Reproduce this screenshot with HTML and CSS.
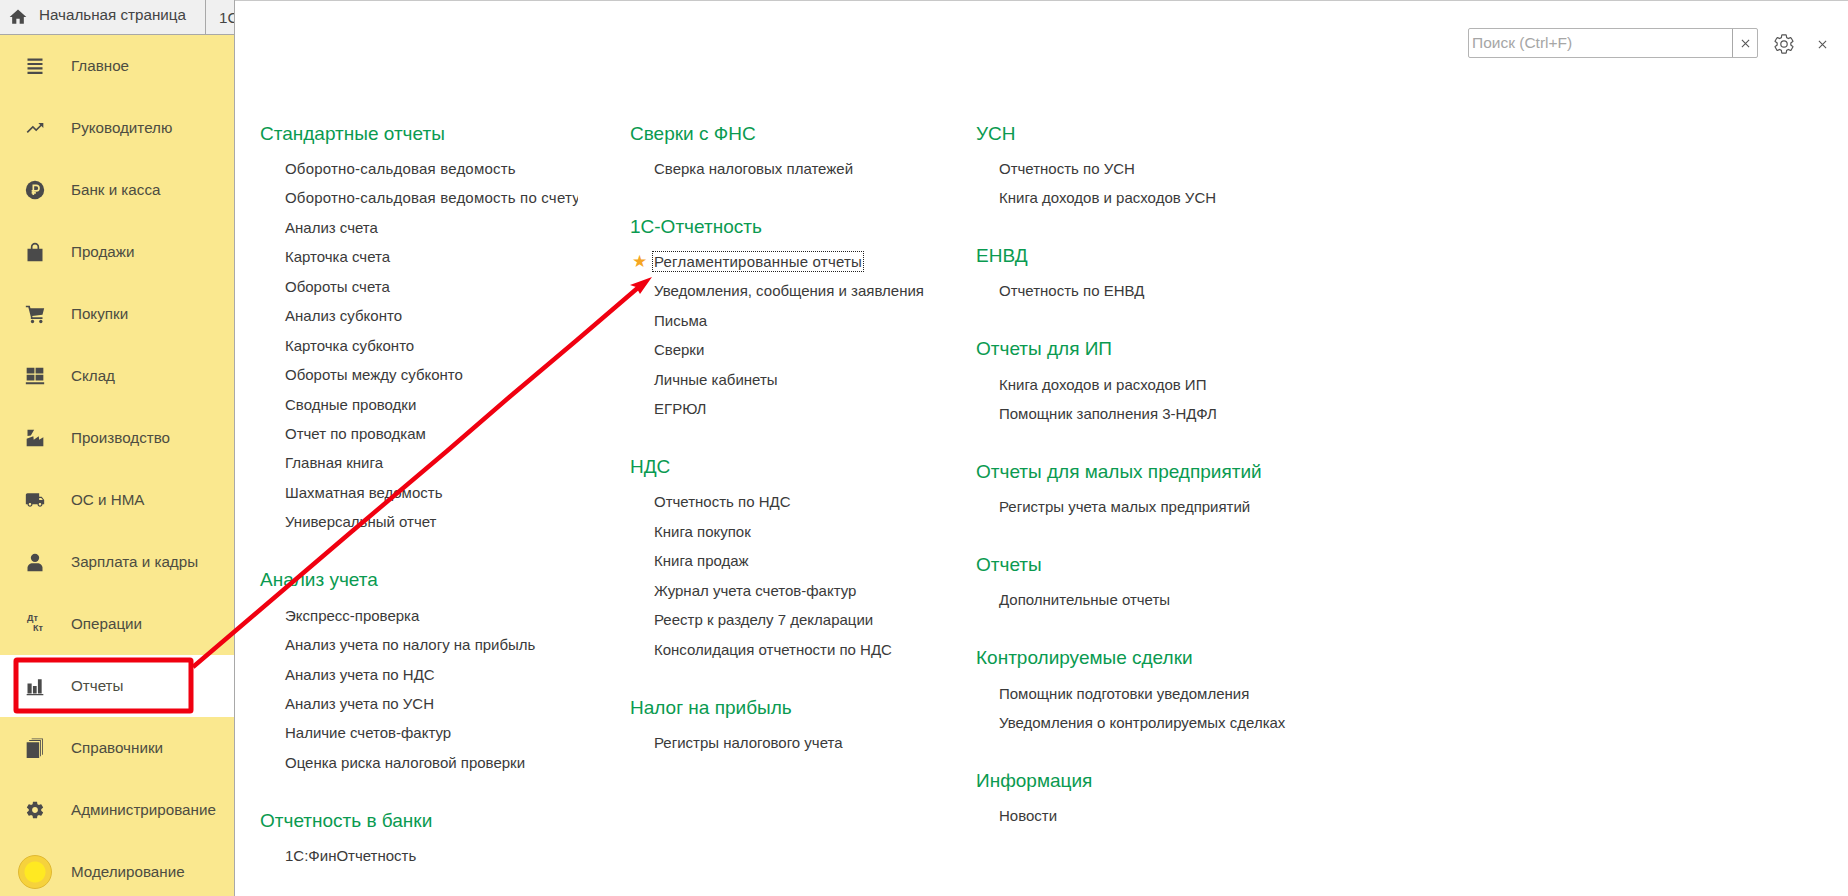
FILE: index.html

```html
<!DOCTYPE html>
<html lang="ru">
<head>
  <meta charset="UTF-8" />
  <title>Отчеты</title>
  <link rel="stylesheet" href="styles.css">
</head>
<body>
  <aside class="side">
    <div class="tabs">
      <svg class="home" viewBox="0 0 24 24"><path d="M10 20v-6h4v6h5v-8h3L12 3 2 12h3v8z"/></svg>
      <span class="tab-name">Начальная страница</span>
      <span class="tab-next">1С</span>
    </div>
    <nav class="nav">
      <a class="nav-row"><span class="ico"><svg viewBox="0 0 24 24"><path d="M3 3h18v2.600H3zM3 8.300h18v2.600H3zM3 13.600h18v2.600H3zM3 18.900h18v2.600H3z"/></svg></span>Главное</a>
      <a class="nav-row"><span class="ico"><svg viewBox="0 0 24 24"><path d="M16 6l2.290 2.290-4.880 4.880-4-4L2 16.590 3.410 18l6-6 4 4 6.300-6.290L22 12V6z"/></svg></span>Руководителю</a>
      <a class="nav-row"><span class="ico"><svg viewBox="0 0 24 24"><circle cx="12" cy="12" r="11"/><path d="M10 18V6.500h3.500a3.300 3.300 0 0 1 0 6.600H8M8 15.500h5" fill="none" stroke="#fae88f" stroke-width="2"/></svg></span>Банк и касса</a>
      <a class="nav-row"><span class="ico"><svg viewBox="0 0 24 24"><path d="M3 8h4V6a5 5 0 0 1 10 0v2h4v15H3zM9 8h6V6a3 3 0 0 0-6 0z" fill-rule="evenodd"/></svg></span>Продажи</a>
      <a class="nav-row"><span class="ico"><svg viewBox="0 0 24 24"><path d="M1 2v2h3l3 11.500V18h14v-2H9l-.3-1.500L21 13l2-8H6.500L5.800 2z"/><circle cx="9" cy="21" r="2"/><circle cx="19" cy="21" r="2"/></svg></span>Покупки</a>
      <a class="nav-row"><span class="ico"><svg viewBox="0 0 24 24"><path d="M2 2h9.300v7H2zM12.700 2H22v7h-9.300zM2 10.500h9.300v7H2zM12.700 10.500H22v7h-9.300zM1 19.500h22V22H1z"/></svg></span>Склад</a>
      <a class="nav-row"><span class="ico"><svg viewBox="0 0 24 24"><path d="M3 2h8l-4 7-4 .500zM2 22V13l8-3 .500 4 6-4 .500 4 5-3v11z"/></svg></span>Производство</a>
      <a class="nav-row"><span class="ico"><svg viewBox="0 0 24 24"><path d="M20 8h-3V4H3c-1.100 0-2 .9-2 2v11h2c0 1.660 1.340 3 3 3s3-1.340 3-3h6c0 1.660 1.340 3 3 3s3-1.340 3-3h2v-5l-3-4zM6 18.500c-.83 0-1.500-.67-1.500-1.500s.67-1.500 1.500-1.500 1.500.67 1.500 1.500-.67 1.500-1.500 1.500zm13.500-9l1.960 2.500H17V9.500h2.500zm-1.500 9c-.83 0-1.500-.67-1.500-1.500s.67-1.500 1.500-1.500 1.500.67 1.500 1.500-.67 1.500-1.500 1.500z"/></svg></span>ОС и НМА</a>
      <a class="nav-row"><span class="ico"><svg viewBox="0 0 24 24"><circle cx="12" cy="7" r="5"/><path d="M3 23v-4c0-3 3-5.500 6-5.500h6c3 0 6 2.500 6 5.500v4z"/></svg></span>Зарплата и кадры</a>
      <a class="nav-row"><span class="ico dtkt"><span class="dt">Дт</span><span class="kt">Кт</span></span>Операции</a>
      <a class="nav-row nav-row-on"><span class="ico"><svg viewBox="0 0 24 24"><path d="M3 9h5v12H3zM9.500 12h4.500v9H9.500zM15.500 4H20v17h-4.500zM2 21.500h20V23H2z"/></svg></span>Отчеты</a>
      <a class="nav-row"><span class="ico"><svg viewBox="0 0 24 24"><path d="M2 5h15v19H2zM18 3h1v19h-1zM20.500 1h1v19h-1zM5 2.500h14v1H5zM8 .5h13.500v1H8z"/></svg></span>Справочники</a>
      <a class="nav-row"><span class="ico"><svg viewBox="0 0 24 24"><path d="M19.430 12.980c.04-.32.07-.64.07-.98s-.03-.66-.07-.98l2.110-1.650c.19-.15.24-.42.12-.64l-2-3.460c-.12-.22-.39-.3-.61-.22l-2.490 1c-.52-.4-1.080-.73-1.690-.98l-.38-2.650C14.460 2.180 14.250 2 14 2h-4c-.25 0-.46.18-.49.42l-.38 2.650c-.61.25-1.170.59-1.690.98l-2.490-1c-.23-.09-.49 0-.61.22l-2 3.460c-.13.22-.07.49.12.64l2.110 1.650c-.04.32-.07.65-.07.98s.03.66.07.98l-2.110 1.650c-.19.15-.24.42-.12.64l2 3.460c.12.22.39.3.61.22l2.490-1c.52.4 1.080.73 1.690.98l.38 2.650c.03.24.24.42.49.42h4c.25 0 .46-.18.49-.42l.38-2.650c.61-.25 1.170-.59 1.690-.98l2.490 1c.23.09.49 0 .61-.22l2-3.460c.12-.22.07-.49-.12-.64l-2.110-1.650zM12 15.500c-1.930 0-3.500-1.570-3.500-3.500s1.570-3.500 3.500-3.500 3.500 1.570 3.500 3.500-1.570 3.500-3.500 3.500z"/></svg></span>Администрирование</a>
      <a class="nav-row"><span class="ico"><span class="sun"></span></span>Моделирование</a>
    </nav>
  </aside>

  <main class="main">
    <div class="tools">
      <div class="search">
        <span class="search-text">Поиск (Ctrl+F)</span>
        <span class="search-x"><svg viewBox="0 0 10 10"><path d="M1 1l8 8M9 1l-8 8"/></svg></span>
      </div>
      <svg class="gear" viewBox="0 0 24 24"><path d="M19.430 12.980c.04-.32.07-.64.07-.98s-.03-.66-.07-.98l2.110-1.650c.19-.15.24-.42.12-.64l-2-3.460c-.12-.22-.39-.3-.61-.22l-2.490 1c-.52-.4-1.080-.73-1.690-.98l-.38-2.650C14.460 2.180 14.250 2 14 2h-4c-.25 0-.46.18-.49.42l-.38 2.650c-.61.25-1.170.59-1.690.98l-2.490-1c-.23-.09-.49 0-.61.22l-2 3.460c-.13.22-.07.49.12.64l2.110 1.650c-.04.32-.07.65-.07.98s.03.66.07.98l-2.110 1.650c-.19.15-.24.42-.12.64l2 3.460c.12.22.39.3.61.22l2.490-1c.52.4 1.080.73 1.690.98l.38 2.650c.03.24.24.42.49.42h4c.25 0 .46-.18.49-.42l.38-2.650c.61-.25 1.170-.59 1.690-.98l2.490 1c.23.09.49 0 .61-.22l2-3.460c.12-.22.07-.49-.12-.64l-2.110-1.650z"/><circle cx="12" cy="12" r="3.500"/></svg>
      <svg class="close" viewBox="0 0 10 10"><path d="M1 1l8 8M9 1l-8 8"/></svg>
    </div>

    <div class="cols">
      <div class="col col-1">
        <section class="group">
          <h2>Стандартные отчеты</h2>
          <a class="wide">Оборотно-сальдовая ведомость</a>
          <a class="wide cut">Оборотно-сальдовая ведомость по счету</a>
          <a>Анализ счета</a>
          <a>Карточка счета</a>
          <a>Обороты счета</a>
          <a>Анализ субконто</a>
          <a>Карточка субконто</a>
          <a>Обороты между субконто</a>
          <a>Сводные проводки</a>
          <a>Отчет по проводкам</a>
          <a>Главная книга</a>
          <a>Шахматная ведомость</a>
          <a>Универсальный отчет</a>
        </section>
        <section class="group">
          <h2>Анализ учета</h2>
          <a>Экспресс-проверка</a>
          <a>Анализ учета по налогу на прибыль</a>
          <a>Анализ учета по НДС</a>
          <a>Анализ учета по УСН</a>
          <a>Наличие счетов-фактур</a>
          <a>Оценка риска налоговой проверки</a>
        </section>
        <section class="group">
          <h2>Отчетность в банки</h2>
          <a>1С:ФинОтчетность</a>
        </section>
      </div>

      <div class="col col-2">
        <section class="group">
          <h2>Сверки с ФНС</h2>
          <a>Сверка налоговых платежей</a>
        </section>
        <section class="group">
          <h2>1С-Отчетность</h2>
          <a class="fav"><span class="star">★</span><span class="focus wide">Регламентированные отчеты</span></a>
          <a>Уведомления, сообщения и заявления</a>
          <a>Письма</a>
          <a>Сверки</a>
          <a>Личные кабинеты</a>
          <a>ЕГРЮЛ</a>
        </section>
        <section class="group">
          <h2>НДС</h2>
          <a>Отчетность по НДС</a>
          <a>Книга покупок</a>
          <a>Книга продаж</a>
          <a>Журнал учета счетов-фактур</a>
          <a>Реестр к разделу 7 декларации</a>
          <a>Консолидация отчетности по НДС</a>
        </section>
        <section class="group">
          <h2>Налог на прибыль</h2>
          <a>Регистры налогового учета</a>
        </section>
      </div>

      <div class="col col-3">
        <section class="group">
          <h2>УСН</h2>
          <a>Отчетность по УСН</a>
          <a>Книга доходов и расходов УСН</a>
        </section>
        <section class="group">
          <h2>ЕНВД</h2>
          <a>Отчетность по ЕНВД</a>
        </section>
        <section class="group">
          <h2>Отчеты для ИП</h2>
          <a>Книга доходов и расходов ИП</a>
          <a>Помощник заполнения 3-НДФЛ</a>
        </section>
        <section class="group">
          <h2>Отчеты для малых предприятий</h2>
          <a>Регистры учета малых предприятий</a>
        </section>
        <section class="group">
          <h2>Отчеты</h2>
          <a>Дополнительные отчеты</a>
        </section>
        <section class="group">
          <h2>Контролируемые сделки</h2>
          <a>Помощник подготовки уведомления</a>
          <a>Уведомления о контролируемых сделках</a>
        </section>
        <section class="group">
          <h2>Информация</h2>
          <a>Новости</a>
        </section>
      </div>
    </div>
  </main>

  <!-- красная разметка поверх скриншота -->
  <svg class="marks" viewBox="0 0 1848 896">
    <rect x="16" y="660" width="175" height="51" rx="1" fill="none" stroke="#f00010" stroke-width="5"/>
    <path d="M193 667L350 533 447 451 513 394 577 340 640 286" fill="none" stroke="#f00010" stroke-width="4.500"/>
    <path d="M652 277L630 285 636 287 640 294z" fill="#f00010"/>
  </svg>
</body>
</html>
```

FILE: styles.css

```css
:root {
  --yellow: #fae88f;
  --green: #0a9a50;
  --ink: #3a3a3a;
  --icon: #4a4a4a;
}
* {
  box-sizing: border-box;
}
html, body {
  height: 100%;
}
body {
  margin: 0;
  height: 896px;
  overflow: hidden;
  display: flex;
  position: relative;
  background: #fff;
  color: var(--ink);
  font-family: "Liberation Sans", Arial, sans-serif;
  font-size: 15px;
}
.side {
  width: 235px;
  flex: none;
  border-right: 1px solid #a8a8a8;
  background: var(--yellow);
  font-size: 15.200px;
}
.tabs {
  height: 35px;
  display: flex;
  align-items: center;
  overflow: hidden;
  background: #f0f0f0;
  border-bottom: 1px solid #a8a8a8;
  color: #444;
  white-space: nowrap;
}
.home {
  width: 20px;
  height: 20px;
  margin-left: 8px;
  flex: none;
  fill: #4a4a4a;
}
.tab-name {
  margin-left: 11px;
  width: 167px;
  height: 34px;
  flex: none;
  line-height: 30px;
  border-right: 1px solid #a8a8a8;
}
.tab-next {
  margin-left: 13px;
}
.nav-row {
  height: 62px;
  padding: 0 0 2px 23px;
  display: flex;
  align-items: center;
  color: #4d4d42;
}
.nav-row-on {
  background: #fff;
}
.ico {
  width: 24px;
  height: 24px;
  margin: 2px 24px 0 0;
  display: flex;
  align-items: center;
  justify-content: center;
  position: relative;
  flex: none;
}
.ico svg {
  width: 20px;
  height: 20px;
  fill: var(--icon);
}
.dt, .kt {
  position: absolute;
  font-size: 9px;
  font-weight: 700;
  color: var(--icon);
}
.dt {
  left: 4px;
  top: 1px;
}
.kt {
  left: 10px;
  top: 11px;
}
.sun {
  width: 34px;
  height: 34px;
  flex: none;
  border-radius: 50%;
  background: radial-gradient(circle, #ffe922 0 10px, #f6d23c 11px);
  border: 1px solid #e0b830;
}
.main {
  flex: 1;
  min-width: 0;
  border-top: 1px solid #c8c8c8;
}
.tools {
  height: 111.500px;
  padding: 27px 21px 0 0;
  display: flex;
  justify-content: flex-end;
  align-items: flex-start;
}
.search {
  width: 290px;
  height: 30px;
  display: flex;
  border: 1px solid #b4b4b4;
  border-radius: 2px;
}
.search-text {
  flex: 1;
  padding-left: 3px;
  line-height: 28px;
  color: #a6a6a6;
  font-size: 15.500px;
}
.search-x {
  width: 25px;
  display: flex;
  align-items: center;
  justify-content: center;
  border-left: 1px solid #a8a8a8;
}
.search-x svg, .close {
  width: 9px;
  height: 9px;
  fill: none;
  stroke: #555;
  stroke-width: 1.200;
}
.gear {
  width: 22px;
  height: 22px;
  margin: 5px 0 0 15px;
  fill: none;
  stroke: #555;
  stroke-width: 1.300;
}
.close {
  margin: 12px 0 0 23px;
}
.cols {
  display: flex;
  padding-left: 25px;
}
.col-1 {
  width: 370px;
}
.col-2 {
  width: 346px;
}
.col-3 {
  width: 400px;
}
.group {
  margin-bottom: 22.400px;
}
.group h2 {
  margin: 0;
  height: 41.300px;
  line-height: 41.300px;
  font-size: 19px;
  font-weight: 400;
  color: var(--green);
  white-space: nowrap;
}
.group a {
  display: block;
  height: 29.470px;
  line-height: 29.470px;
  padding-left: 25px;
  white-space: nowrap;
}
.col-2 a {
  padding-left: 24px;
}
.col-3 a {
  padding-left: 23px;
}
.group .wide {
  letter-spacing: .2px;
}
.group .cut {
  width: 318px;
  overflow: hidden;
}
.group .fav {
  display: flex;
  align-items: center;
  padding-left: 2px;
}
.star {
  width: 20px;
  color: #f5a623;
  font-size: 17px;
  line-height: 1;
}
.focus {
  height: 21px;
  line-height: 19px;
  padding: 0 1px;
  margin-left: 0;
  border: 1px dotted #222;
}
.marks {
  position: absolute;
  left: 0;
  top: 0;
  width: 1848px;
  height: 896px;
  pointer-events: none;
}
```
